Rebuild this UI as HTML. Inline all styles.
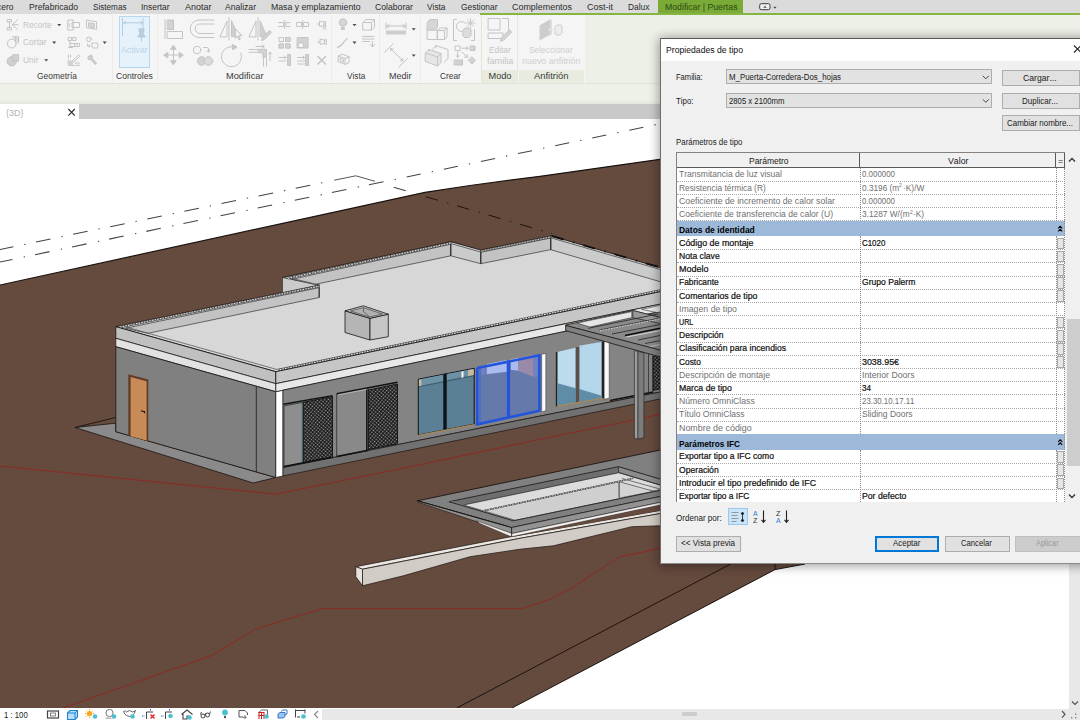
<!DOCTYPE html>
<html><head><meta charset="utf-8"><title>Revit</title>
<style>
html,body{margin:0;padding:0}
body{width:1080px;height:720px;overflow:hidden;position:relative;background:#fff;font-family:"Liberation Sans", sans-serif;}
.t{position:absolute;white-space:pre;line-height:1;transform-origin:0 0;font-kerning:none;}
.a{position:absolute;}
svg{position:absolute;left:0;top:0;overflow:hidden}

#menubar{left:0;top:0;width:1080px;height:14px;background:#dbdbdb}
#ribbon{left:0;top:14px;width:1080px;height:69px;background:#f5f5f5}
#ctx{left:585px;top:14px;width:495px;height:69px;background:#edf0e6}
#ctxline{left:480px;top:13px;width:600px;height:2px;background:#86b545}
#ctxtab{left:658px;top:0;width:85px;height:14px;background:#7aab37}
#modolab{left:482px;top:70px;width:35px;height:13px;background:#e8ecdf}
#anflab{left:519px;top:70px;width:65px;height:13px;background:#e8ecdf}
#optbar{left:0;top:83px;width:1080px;height:21px;background:linear-gradient(#eef1e8 0,#eef1e8 80%,#e4e6de 100%);border-top:1px solid #e2e4dc;box-sizing:border-box}
#tabbar{left:0;top:104px;width:1080px;height:15px;background:#c9c9c9}
#tab3d{left:0;top:104px;width:79px;height:15px;background:#fff}
#status{left:0;top:708px;width:1080px;height:12px;background:#fff}
#hscroll{left:322px;top:709px;width:758px;height:11px;background:#e8e8e8}
#hthumb{left:682px;top:712px;width:15px;height:4px;background:#cdcdcd;border-radius:1px}
#vscroll{left:1069px;top:560px;width:11px;height:149px;background:#e8e8e8}
.sep{position:absolute;top:15px;width:1px;height:67px;background:#ebebeb}
#activar{left:119px;top:16px;width:31px;height:52px;background:#e5f1fb;border:1px solid #b5d7f0;box-sizing:border-box}


#dlg{left:660px;top:38px;width:430px;height:526px;background:#f0f0f0;box-shadow:0 1px 10px 1px rgba(0,0,0,.38);border-left:1px solid #6e6e6e;border-top:1px solid #5a5a5a;border-bottom:1px solid #8a8a8a;box-sizing:border-box}
#dtitle{left:661px;top:39px;width:419px;height:22px;background:#fff}
.combo{position:absolute;left:726px;width:266px;height:15px;background:#e2e2e2;border:1px solid #adadad;box-sizing:border-box}
.btn{position:absolute;height:16px;background:#e1e1e1;border:1px solid #adadad;box-sizing:border-box}
#tbl{left:676px;top:152px;width:389px;height:350px;background:#fff;border-left:1px solid #828282;border-top:1px solid #828282;box-sizing:border-box}
#thead{left:677px;top:153px;width:388px;height:15px;background:#f0f0f0;border-bottom:1px solid #5a5a5a;box-sizing:border-box}
.grp{position:absolute;left:677px;width:388px;background:#9db9d9}
.hl{position:absolute;left:677px;width:388px;height:0;border-top:1px dotted #a8a8a8}
.vl{position:absolute;width:0;border-left:1px dotted #8a8a8a}
.sb{position:absolute;left:1057px;width:7px;background:#e6e6e6;border:1px solid #a8a8a8;box-sizing:border-box}
#dscroll{left:1065px;top:152px;width:15px;height:350px;background:#f0f0f0}
#dthumb{left:1067px;top:319px;width:13px;height:147px;background:#cdcdcd}
#sortsel{left:728px;top:508px;width:20px;height:17px;background:#cce4f7;border:1px solid #99c9ef;box-sizing:border-box}

</style></head><body>
<svg width="1080" height="720" viewBox="0 0 1080 720" style="z-index:0" shape-rendering="geometricPrecision">
<polygon points="0.0,285.0 425.0,192.3 470.0,185.5 520.0,178.8 540.0,176.3 600.0,167.8 660.0,159.3 900.0,130.0 900.0,564.0 805.0,564.0 775.0,569.6 512.0,708.0 0.0,708.0" fill="#654a3e" />
<polyline points="0.0,285.0 425.0,192.3 470.0,185.5 520.0,178.8 540.0,176.3 600.0,167.8 660.0,159.3 900.0,130.0" fill="none" stroke="#1a1410" stroke-width="1.2" />
<polyline points="805.0,564.0 775.0,569.6 512.0,708.0" fill="none" stroke="#1a1410" stroke-width="1.0" />
<polyline points="456.7,708.0 730.7,564.0" fill="none" stroke="#1a1410" stroke-width="1.0" />
<polyline points="775.0,562.0 775.0,569.6" fill="none" stroke="#1a1410" stroke-width="1.0" />
<line x1="0.0" y1="249.5" x2="330.0" y2="181.1" stroke="#444444" stroke-width="1.05" stroke-dasharray="14.81 11.03 1.33 10.72" stroke-dashoffset="1.12"/>
<polyline points="334.2,180.2 355.8,175.8 375.0,181.3" fill="none" stroke="#444444" stroke-width="0.9" />
<line x1="0.0" y1="262.0" x2="385.5" y2="181.3" stroke="#444444" stroke-width="1.05" stroke-dasharray="14.81 11.55 1.33 10.22" stroke-dashoffset="2.15"/>
<line x1="394.0" y1="179.7" x2="660.0" y2="123.7" stroke="#444444" stroke-width="1.05" stroke-dasharray="14.31 11.24 1.33 11.04" stroke-dashoffset="24.93"/>
<line x1="393.7" y1="187.2" x2="406.5" y2="190.9" stroke="#444444" stroke-width="1.05" stroke-dasharray="12.50 9.69 1.35 9.17" stroke-dashoffset="0.00"/>
<line x1="425.8" y1="196.7" x2="552.0" y2="233.6" stroke="#1c1512" stroke-width="1.0" stroke-dasharray="12.50 9.69 1.35 9.17" stroke-dashoffset="0.00"/>
<polyline points="0.0,466.0 276.0,494.2 410.0,466.8 540.0,439.3 630.0,420.8 660.0,414.5" fill="none" stroke="#8d2a22" stroke-width="1.0" />
<polyline points="63.0,708.0 213.0,655.0 255.5,629.0 322.0,608.6 521.5,608.6 551.0,599.0 568.3,590.0 620.0,556.7 643.7,552.0 660.0,548.3" fill="none" stroke="#8d2a22" stroke-width="1.0" />
<polygon points="75.0,427.5 115.8,423.2 115.8,431.7 275.8,477.5 253.3,483.0" fill="#8a8a8a" stroke="#1a1410" stroke-width="0.8" stroke-linejoin="round" />
<polyline points="75.0,427.5 115.8,417.4" fill="none" stroke="#1a1410" stroke-width="0.9" />
<polygon points="115.8,326.7 319.2,285.0 282.5,277.5 450.8,241.7 480.8,250.0 550.8,235.8 660.0,267.5 700.0,279.0 700.0,283.4 660.0,291.7 275.8,371.7" fill="#d7d7d7" stroke="#1a1410" stroke-width="0.9" stroke-linejoin="round" />
<polygon points="125.5,328.3 319.2,287.6 319.2,297.5 148.1,333.3" fill="#c3c3c3" stroke="#333" stroke-width="0.7" stroke-linejoin="round" />
<polygon points="282.5,277.5 319.2,285.0 282.5,292.6" fill="#cbcbcb" stroke="#333" stroke-width="0.7" stroke-linejoin="round" />
<polygon points="292.0,279.3 450.8,244.2 450.8,255.8 315.0,284.4" fill="#c3c3c3" stroke="#333" stroke-width="0.7" stroke-linejoin="round" />
<polygon points="450.8,243.5 480.8,252.0 480.8,263.7 450.8,255.8" fill="#cbcbcb" stroke="#333" stroke-width="0.7" stroke-linejoin="round" />
<polygon points="480.8,252.3 550.8,238.0 550.8,249.6 480.8,263.7" fill="#c3c3c3" stroke="#333" stroke-width="0.7" stroke-linejoin="round" />
<polygon points="550.8,237.8 700.0,281.0 700.0,293.3 550.8,249.7" fill="#cbcbcb" stroke="#333" stroke-width="0.7" stroke-linejoin="round" />
<polyline points="450.8,241.7 450.8,255.8" fill="none" stroke="#222" stroke-width="0.9" />
<polyline points="480.8,250.0 480.8,263.7" fill="none" stroke="#222" stroke-width="0.9" />
<polyline points="550.8,235.8 550.8,249.7" fill="none" stroke="#222" stroke-width="0.9" />
<polyline points="319.2,285.0 319.2,297.5" fill="none" stroke="#222" stroke-width="0.9" />
<line x1="551.7" y1="236.0" x2="660.0" y2="267.4" stroke="#15100d" stroke-width="1.9" stroke-dasharray="12.49 9.68 1.35 9.16" stroke-dashoffset="0.00"/>
<line x1="120" y1="327" x2="319.2" y2="286.2" stroke="#4a4a4a" stroke-width="2.3"/>
<line x1="120" y1="327" x2="319.2" y2="286.2" stroke="#e0e0e0" stroke-width="1.1" stroke-dasharray="1.7 1.0"/>
<line x1="288" y1="278.2" x2="450.8" y2="243" stroke="#4a4a4a" stroke-width="2.3"/>
<line x1="288" y1="278.2" x2="450.8" y2="243" stroke="#e0e0e0" stroke-width="1.1" stroke-dasharray="1.7 1.0"/>
<line x1="482" y1="251" x2="550.8" y2="236.9" stroke="#4a4a4a" stroke-width="2.1"/>
<line x1="482" y1="251" x2="550.8" y2="236.9" stroke="#e0e0e0" stroke-width="0.9" stroke-dasharray="1.7 1.0"/>
<polyline points="291.5,278.2 316.0,284.3" fill="none" stroke="#4a4a4a" stroke-width="0.7" />
<polyline points="125.5,326.9 283.0,371.2" fill="none" stroke="#4a4a4a" stroke-width="0.7" />
<line x1="277" y1="370.3" x2="700" y2="282.2" stroke="#4a4a4a" stroke-width="2.5"/>
<line x1="277" y1="370.3" x2="700" y2="282.2" stroke="#e4e4e4" stroke-width="1.2" stroke-dasharray="1.7 1.0"/>
<polygon points="345.0,310.8 370.0,318.3 370.0,340.0 345.0,332.5" fill="#b5b5b5" stroke="#1a1410" stroke-width="0.8" stroke-linejoin="round" />
<polygon points="370.0,318.3 388.3,314.2 388.3,336.7 370.0,340.0" fill="#c6c6c6" stroke="#1a1410" stroke-width="0.8" stroke-linejoin="round" />
<polygon points="345.0,310.8 363.3,305.8 388.3,314.2 370.0,318.3" fill="#c2c2c2" stroke="#1a1410" stroke-width="0.8" stroke-linejoin="round" />
<polygon points="350.5,311.0 363.5,307.6 382.5,314.0 369.7,317.0" fill="#b0b0b0" stroke="#333" stroke-width="0.6" stroke-linejoin="round" />
<polyline points="363.5,307.6 363.5,311.5 369.7,317.0" fill="none" stroke="#333" stroke-width="0.6" />
<polygon points="115.8,326.7 275.8,371.7 275.8,383.7 115.8,338.3" fill="#c0c0c0" stroke="#1a1410" stroke-width="0.8" stroke-linejoin="round" />
<polygon points="115.8,338.3 275.8,383.7 275.8,391.7 115.8,346.7" fill="#e2e2e2" stroke="#1a1410" stroke-width="0.7" stroke-linejoin="round" />
<polygon points="115.8,346.7 275.8,391.7 275.8,477.5 115.8,431.7" fill="#808080" stroke="#1a1410" stroke-width="0.8" stroke-linejoin="round" />
<polyline points="256.3,386.3 256.3,472.0" fill="none" stroke="#1a1a1a" stroke-width="0.8" />
<polygon points="128.3,374.2 148.3,379.4 148.3,441.3 128.3,435.6" fill="#5e3d28" />
<polygon points="130.6,377.0 146.6,381.2 146.6,440.6 130.6,436.2" fill="#c88a56" />
<polyline points="141.0,410.8 144.5,411.6 144.5,413.3" fill="none" stroke="#111" stroke-width="1.1" />
<polygon points="275.8,391.7 283.0,390.2 283.0,476.0 275.8,477.5" fill="#ffffff" stroke="#1a1410" stroke-width="0.7" stroke-linejoin="round" />
<polygon points="275.8,371.7 700.0,283.4 700.0,295.9 275.8,383.7" fill="#c6c6c6" stroke="#1a1410" stroke-width="0.8" stroke-linejoin="round" />
<polygon points="275.8,383.7 700.0,295.9 700.0,303.3 275.8,391.7" fill="#e8e8e8" stroke="#1a1410" stroke-width="0.7" stroke-linejoin="round" />
<polygon points="283.0,390.2 700.0,303.3 700.0,384.0 283.0,467.6" fill="#848484" stroke="#1a1410" stroke-width="0.7" stroke-linejoin="round" />
<polygon points="283.0,467.6 700.0,384.0 700.0,390.8 283.0,475.9" fill="#717171" stroke="#1a1410" stroke-width="0.7" stroke-linejoin="round" />
<defs><pattern id="hatch" width="2.6" height="2.6" patternUnits="userSpaceOnUse" patternTransform="rotate(40)">
<rect width="2.6" height="2.6" fill="#080808"/><rect x="0.55" y="0.55" width="1.5" height="1.5" fill="#a4a4a4"/></pattern></defs>
<polygon points="284.0,405.9 303.3,402.3 303.3,463.0 284.0,466.8" fill="#8e8e8e" stroke="#222" stroke-width="0.7" stroke-linejoin="round" />
<polyline points="283.3,404.2 332.5,395.6" fill="none" stroke="#111" stroke-width="1.4" />
<polygon points="303.3,402.3 332.5,396.5 332.5,457.2 303.3,463.0" fill="url(#hatch)" stroke="#111" stroke-width="0.9" stroke-linejoin="round" />
<polyline points="302.3,403.0 302.3,463.0" fill="none" stroke="#3f5f6e" stroke-width="1.0" />
<polyline points="284.0,466.6 333.0,457.0" fill="none" stroke="#111" stroke-width="1.5" />
<polygon points="336.7,394.6 368.3,388.4 368.3,450.2 336.7,456.6" fill="#898989" stroke="#222" stroke-width="0.7" stroke-linejoin="round" />
<polyline points="336.7,393.8 397.5,382.2" fill="none" stroke="#111" stroke-width="1.4" />
<polyline points="338.0,394.8 367.0,389.2" fill="none" stroke="#d0d0d0" stroke-width="0.8" />
<polygon points="368.3,390.0 397.5,384.0 397.5,443.7 368.3,449.5" fill="url(#hatch)" stroke="#111" stroke-width="0.9" stroke-linejoin="round" />
<polyline points="366.8,389.5 366.8,450.0" fill="none" stroke="#111" stroke-width="1.4" />
<polyline points="336.7,456.6 368.3,450.2" fill="none" stroke="#111" stroke-width="1.5" />
<polygon points="418.3,379.2 474.2,368.3 474.2,424.2 418.3,435.0" fill="#5b7f94" stroke="#111" stroke-width="1.0" stroke-linejoin="round" />
<polygon points="418.8,379.6 473.7,368.8 473.7,374.0 418.8,386.5" fill="#6d91a5" />
<polygon points="419.0,380.0 421.5,379.5 421.5,386.0 419.0,386.5" fill="#c9b99c" />
<polygon points="468.0,370.2 473.7,369.0 473.7,375.0 468.0,376.3" fill="#c9b99c" />
<polygon points="461.5,371.5 463.5,371.1 463.5,378.0 461.5,378.4" fill="#f4f4f4" />
<polyline points="418.8,386.7 473.7,375.8" fill="none" stroke="#2f4a5a" stroke-width="0.7" />
<polygon points="443.3,374.3 446.7,373.6 446.7,429.6 443.3,430.3" fill="#0c1418" />
<polyline points="418.3,435.4 474.2,424.6" fill="none" stroke="#a98c5c" stroke-width="1.3" />
<polygon points="475.8,367.5 540.8,354.2 540.8,411.7 475.8,425.8" fill="#6579aa" />
<polygon points="481.3,367.3 485.2,366.5 485.2,374.6 481.3,375.3" fill="#7283c4" />
<polygon points="486.7,363.9 506.7,359.9 506.7,371.7 486.7,374.3" fill="#aabbf0" />
<polygon points="510.8,359.2 518.3,357.7 518.3,370.8 510.8,369.8" fill="#aabbf0" />
<polygon points="518.3,357.7 533.3,354.8 533.3,376.7 518.3,370.8" fill="#9b89a9" />
<polygon points="533.3,354.8 537.5,354.0 537.5,377.0 533.3,376.7" fill="#7283c4" />
<polyline points="477.2,368.0 539.4,355.3 539.4,410.8 477.2,424.3 477.2,368.0" fill="none" stroke="#2255dc" stroke-width="2.6" />
<polyline points="508.5,362.0 508.5,417.5" fill="none" stroke="#2255dc" stroke-width="3.2" />
<polyline points="480.0,368.5 480.0,423.0" fill="none" stroke="#3f66dd" stroke-width="1.0" />
<polygon points="541.7,354.2 545.8,353.4 545.8,410.8 541.7,411.7" fill="#fbfbfb" stroke="#333" stroke-width="0.5" stroke-linejoin="round" />
<polygon points="555.8,352.2 604.2,341.2 604.2,398.5 555.8,406.6" fill="#222" />
<polygon points="557.5,351.7 575.8,347.5 575.8,402.5 557.5,405.8" fill="#bcdcee" />
<polygon points="579.2,345.8 601.7,341.7 601.7,398.3 579.2,402.0" fill="#b4d7eb" />
<polygon points="557.5,383.3 575.8,388.3 575.8,402.5 557.5,405.8" fill="#5f8ca6" />
<polygon points="579.2,389.0 601.7,395.8 601.7,398.3 579.2,402.0" fill="#5f8ca6" />
<polygon points="575.8,347.5 579.2,346.7 579.2,402.0 575.8,402.6" fill="#5a5048" />
<polyline points="557.0,406.2 603.0,398.4" fill="none" stroke="#a98c5c" stroke-width="1.2" />
<polygon points="604.2,341.0 609.2,340.0 609.2,398.2 604.2,399.2" fill="#fbfbfb" stroke="#333" stroke-width="0.5" stroke-linejoin="round" />
<polygon points="653.0,356.7 700.0,347.0 700.0,381.0 653.0,390.4" fill="url(#hatch)" stroke="#111" stroke-width="0.8" stroke-linejoin="round" />
<polyline points="610.0,400.5 653.0,392.0" fill="none" stroke="#111" stroke-width="1.3" />
<polygon points="565.6,325.0 632.8,310.5 700.0,327.5 700.0,361.0 565.6,325.6" fill="#8a8a8a" stroke="#1a1410" stroke-width="0.8" stroke-linejoin="round" />
<polygon points="577.0,323.1 631.8,311.6 631.8,317.6 590.0,327.0" fill="#e6e6e6" stroke="#333" stroke-width="0.6" stroke-linejoin="round" />
<polygon points="641.5,309.3 700.0,297.0 700.0,303.3 657.0,312.6" fill="#e6e6e6" stroke="#333" stroke-width="0.6" stroke-linejoin="round" />
<polygon points="632.8,310.5 700.0,327.5 700.0,331.5 632.8,317.8" fill="#9a9a9a" stroke="#222" stroke-width="0.7" stroke-linejoin="round" />
<polyline points="588.3,328.3 658.3,313.9" fill="none" stroke="#222" stroke-width="0.8" />
<polyline points="599.4,330.0 658.3,318.3" fill="none" stroke="#333" stroke-width="0.8" />
<line x1="600" y1="330.8" x2="660" y2="318.9" stroke="#ddd" stroke-width="0.9" stroke-dasharray="1.6 1.2"/>
<polyline points="612.0,334.0 660.0,324.5" fill="none" stroke="#222" stroke-width="0.8" />
<polyline points="625.0,335.6 660.0,328.3" fill="none" stroke="#0a0a0a" stroke-width="1.5" />
<polyline points="626.1,337.1 660.0,330.6" fill="none" stroke="#e8e8e8" stroke-width="0.8" />
<polyline points="638.0,340.0 660.0,335.5" fill="none" stroke="#222" stroke-width="0.8" />
<polyline points="645.0,343.5 660.0,340.6" fill="none" stroke="#222" stroke-width="0.8" />
<polyline points="650.0,346.5 660.0,344.5" fill="none" stroke="#ccc" stroke-width="0.8" />
<polygon points="565.6,325.4 700.0,360.4 700.0,368.0 565.6,330.6" fill="#808080" stroke="#1a1410" stroke-width="0.8" stroke-linejoin="round" />
<polygon points="634.4,350.6 638.0,351.5 638.0,439.0 634.4,438.2" fill="#9c9c9c" stroke="#222" stroke-width="0.6" stroke-linejoin="round" />
<polygon points="638.0,351.5 643.9,353.0 643.9,437.8 638.0,439.0" fill="#7c7c7c" stroke="#222" stroke-width="0.6" stroke-linejoin="round" />
<polyline points="648.5,354.0 648.5,394.5" fill="none" stroke="#222" stroke-width="0.7" />
<polyline points="652.8,355.3 652.8,393.5" fill="none" stroke="#222" stroke-width="0.7" />
<polygon points="417.5,500.8 700.0,441.7 700.0,488.2 511.7,527.5" fill="#808080" stroke="#1a1410" stroke-width="0.9" stroke-linejoin="round" />
<polygon points="511.7,527.5 700.0,488.2 700.0,494.0 511.7,533.6" fill="#929292" stroke="#1a1410" stroke-width="0.6" stroke-linejoin="round" />
<polygon points="511.7,533.6 700.0,494.0 700.0,496.5 511.7,536.7" fill="#f0f0f0" stroke="#1a1410" stroke-width="0.5" stroke-linejoin="round" />
<polygon points="417.5,500.8 511.7,527.5 511.7,533.4 417.5,501.9" fill="#929292" stroke="#1a1410" stroke-width="0.6" stroke-linejoin="round" />
<polygon points="476.0,520.6 511.7,533.4 511.7,536.9 480.0,523.5" fill="#f0f0f0" stroke="#1a1410" stroke-width="0.4" stroke-linejoin="round" />
<polygon points="449.2,501.7 618.3,466.7 700.0,491.0 700.0,482.0 515.0,520.0" fill="#6e6e6e" stroke="#1a1410" stroke-width="0.8" stroke-linejoin="round" />
<polygon points="463.3,505.0 618.8,472.7 700.0,497.0 700.0,484.5 516.0,520.4" fill="#dcdcdc" stroke="#222" stroke-width="0.7" stroke-linejoin="round" />
<polygon points="618.3,466.7 700.0,491.0 700.0,496.8 618.8,472.5" fill="#8c8c8c" stroke="#222" stroke-width="0.7" stroke-linejoin="round" />
<polygon points="483.3,510.8 619.2,481.7 619.2,497.5 700.0,482.0 515.5,520.4" fill="#cfcfcf" stroke="#333" stroke-width="0.6" stroke-linejoin="round" />
<polygon points="619.2,481.7 660.0,493.0 700.0,482.0 619.2,497.5" fill="#d4d4d4" />
<polyline points="619.2,481.7 619.2,497.5" fill="none" stroke="#333" stroke-width="0.8" />
<polyline points="619.2,481.7 660.0,493.0" fill="none" stroke="#444" stroke-width="0.7" />
<polyline points="622.0,478.5 660.0,489.0" fill="none" stroke="#444" stroke-width="0.7" />
<polyline points="483.3,510.8 633.3,478.3" fill="none" stroke="#444" stroke-width="1.4" />
<line x1="483.3" y1="510.8" x2="633.3" y2="478.3" stroke="#e8e8e8" stroke-width="0.8" stroke-dasharray="1.5 1.2"/>
<polygon points="515.0,520.0 700.0,481.5 700.0,488.2 511.7,527.5 449.2,501.7 452.0,501.2" fill="#808080" />
<polyline points="449.2,501.7 513.3,520.8 700.0,482.0" fill="none" stroke="#1a1410" stroke-width="0.8" />
<polyline points="511.7,527.5 700.0,488.2" fill="none" stroke="#1a1410" stroke-width="0.8" />
<polyline points="417.5,500.8 511.7,527.5 511.7,536.7" fill="none" stroke="#1a1410" stroke-width="0.8" />
<polygon points="355.8,566.7 506.7,537.5 700.0,503.5 700.0,506.5 520.0,538.3 362.5,569.2" fill="#ebe7e3" stroke="#1a1410" stroke-width="0.7" stroke-linejoin="round" />
<polygon points="362.5,569.2 520.0,538.3 700.0,506.5 700.0,525.5 660.0,525.8 631.7,526.7 553.3,545.8 520.0,549.2 470.0,556.7 403.3,575.8 362.5,585.8" fill="#d2ccc6" stroke="#1a1410" stroke-width="0.7" stroke-linejoin="round" />
<polygon points="355.8,566.7 362.5,569.2 362.5,585.8 355.8,576.7" fill="#e6e2de" stroke="#1a1410" stroke-width="0.7" stroke-linejoin="round" />
<polygon points="511.7,527.5 700.0,488.2 700.0,494.0 511.7,533.6" fill="#929292" stroke="#1a1410" stroke-width="0.6" stroke-linejoin="round" />
<polygon points="511.7,533.6 700.0,494.0 700.0,496.5 511.7,536.7" fill="#f0f0f0" stroke="#1a1410" stroke-width="0.5" stroke-linejoin="round" />
<polygon points="511.7,536.9 700.0,496.7 700.0,503.3 511.7,536.9" fill="#654a3e" />
</svg>
<div style="position:absolute;left:0;top:0;z-index:2">

<div class="a" id="menubar"></div>
<div class="a" id="ribbon"></div>
<div class="a" id="ctx"></div>
<div class="a" id="modolab"></div>
<div class="a" id="anflab"></div>
<div class="a" id="ctxtab"></div>
<div class="a" id="ctxline"></div>
<div class="sep" style="left:112px"></div>
<div class="sep" style="left:157px"></div>
<div class="sep" style="left:331px"></div>
<div class="sep" style="left:379px"></div>
<div class="sep" style="left:420px"></div>
<div class="sep" style="left:481px;background:#dfe6d2"></div>
<div class="sep" style="left:517px;background:#e4e8da"></div>
<div class="a" id="activar"></div>
<div class="a" id="optbar"></div>
<div class="a" id="tabbar"></div>
<div class="a" id="tab3d"></div>
<div class="a" id="status"></div>
<div class="a" id="hscroll"></div>
<div class="a" id="hthumb"></div>
<div class="a" id="vscroll"></div>
<svg width="1080" height="720" viewBox="0 0 1080 720" style="z-index:2;pointer-events:none">
<g fill="none" stroke="#c4c4c4" stroke-width="1" stroke-linecap="round" stroke-linejoin="round">
<!-- Geometria col1 -->
<path d="M9.5 21.5 v7 M7.5 19.5 h4 v2.5 h-4z M7.5 27.5 h4 v2.5 h-4z M17.5 20 l-5.5 4.7 l5.5 4.7 M13 24.7 h5"/>
<circle cx="11.8" cy="43.6" r="4.4"/><path d="M12.5 36.7 h6 v6.3 M14 38.3 h3.2 v3.6 M15.5 37 v5" />
<circle cx="11.8" cy="61.3" r="4.7" fill="#cfcfcf"/><path d="M12.8 54.7 h5.8 v6.4 h-5.8z" fill="#cfcfcf"/>
<!-- col2 -->
<path d="M68.2 20 h5 v10 h-5z M72.5 22.5 h7 v5 h-7z M70 23.5 l-1.3 1.5 l1.3 1.5"/>
<path d="M86.8 20.2 l9.8 1.5 v7.6 l-9.8 -1.5z"/><path d="M89 22.8 l5.4 .8 v4 l-5.4 -.8z" fill="#d6d6d6"/>
<path d="M68.5 37.5 h3 v3 h-3z M73 37.5 h3 v3 h-3z M70 40.5 v7 M70 43.5 h9.5 v3 h-9.5 M74.5 43.5 v3 M77 43.5 v3 M68.5 47.5 h4"/>
<circle cx="88.8" cy="39.3" r="2.3"/><path d="M92.2 43 h5 q.6 0 .6 .6 v3.8 q0 .6 -.6 .6 h-4.2 q-.8 0 -.8 -.8z M87.5 44 v2 h2.5 M89 45 l1.2 1 l-1.2 1"/>
<path d="M68.3 55 v3 M70.5 55 v2 M68.3 60 v5.5 h5.5 M68.3 62 h4 v3.5" /><path d="M68.5 60.5 h4.5 v5 h-4.5z" fill="#d2d2d2" stroke="none"/><path d="M73 60 l5.5 -5 l1.3 1.4 l-5.5 5z M75 63 h4.5 M75 65.3 h4.5"/>
<path d="M88 57 l3 -2.2 l1.8 2 l-1.2 1 l5 5.5 l-1.3 1.2 l-5 -5.5 l-1 .8z" fill="#cfcfcf"/>
<!-- Modificar big -->
<path d="M165 20 v18.5"/><path d="M167.5 20 h6 v9.5 h-6z" fill="#d2d2d2"/><path d="M167.5 31.5 h15 v7 h-15z"/>
<path d="M214 20 h-15 a8.75 8.75 0 0 0 0 17.5 h15 M214 24 h-14 a4.75 4.75 0 0 0 0 9.5 h14"/>
<path d="M229 17.5 v22.5 M220 36.5 l7 -15.5 v15.5z"/><path d="M231.5 21 v15.5 h6.5z" fill="#d0d0d0"/><path d="M235.2 29.2 v9 l2.2 -2 l1.6 3.6 l1.3 -.6 l-1.6 -3.5 h3z" fill="#f5f5f5" stroke="#bdbdbd"/>
<path d="M258 17.5 v22.5 M249 36.5 l7 -15.5 v15.5z"/><path d="M260 21 v15.5 h6.5z" fill="#d0d0d0"/><path d="M261.5 40.3 l1 -3 l7 -7 l2 2 l-7 7z" fill="#d0d0d0"/>
<path d="M173.5 46 v18 M164.5 55 h18"/><path d="M173.500 45.5 l2.6 3.800 h-5.2z M173.500 64.5 l2.6 -3.800 h-5.200z M164 55 l3.800 -2.600 v5.200z M183 55 l-3.800 -2.600 v5.200z" fill="#c4c4c4"/>
<circle cx="197" cy="50" r="3.7"/><path d="M203.500 47.500 h3.500 q1.500 0 1.500 1.500 v2.500 M207 50.500 l1.500 1.800 l1.500 -1.800"/><circle cx="201.700" cy="61" r="4.300" fill="#d2d2d2"/><circle cx="208.500" cy="61" r="4.300" fill="#dadada"/>
<path d="M236.500 48 a10 10 0 1 0 4.300 5"/><path d="M232.500 44.500 l4.500 2.300 l-4 2.800z" fill="#c4c4c4"/>
<path d="M249 49.500 h8.500 M249 52.300 h8.500 M256 46.500 h8 M262.300 45 l2 1.500 l-2 1.500 M263.500 58.500 v7.500 M266.500 58.500 v7.500 M270 60.500 v-8 M268.500 54 l1.500 -2 l1.500 2"/><path d="M258.500 49.300 h7.800 v8 h-3.400 v-4.600 h-4.400z" fill="#d2d2d2"/>
<!-- small grid -->
<path d="M278.500 22.500 h5 v4 h-5 M290 22.500 h-4 v4 h4 M284.700 20.500 v8"/>
<path d="M297 22.500 h4.500 v4 h-4.500z M304 22.500 h4.500 v4 h-4.500z M302.700 20.500 v8"/>
<path d="M317 24 h2.500 M319.500 21.500 v5 l4.500 -1 v-3z M324 22.200 l1.500 -.7 v5 l-1.500 -.7 M323 26.500 l3 3 M326 26.500 l-3 3"/>
<path d="M279.500 37.500 h4 v4 h-4z M286 37.500 h4 v4 h-4z M279.500 44 h4 v4 h-4z M286 44 h4 v4 h-4z" /><path d="M286 37.500 h4 v4 h-4z M279.500 44 h4 v4 h-4z M286 44 h4 v4 h-4z" fill="#d6d6d6"/>
<path d="M297.500 37.500 h10.500 v10.500 h-10.500z" fill="#d2d2d2"/><path d="M298.500 43 h5 v4.500 h-5z" fill="#f5f5f5"/>
<path d="M317.500 42 h2.500 M320 39.500 v5 l4.500 -1 v-3z M324.500 40.200 l1.800 -.7 v5 l-1.800 -.7"/>
<path d="M279 57.500 h7 M284.500 56 l1.500 1.500 l-1.500 1.500 M279 61 h7"/><path d="M288 54.500 h2.500 v11 h-2.500z" fill="#d0d0d0"/>
<path d="M297.500 57.500 h7 M303 56 l1.500 1.500 l-1.500 1.500 M297.500 61 h7 M297.500 64 h7"/><path d="M306 54.500 h2.500 v11 h-2.500z" fill="#d0d0d0"/>
<path d="M318 56.500 l7.500 7.500 M325.500 56.500 l-7.500 7.500" stroke-width="1.500"/>
<!-- Vista -->
<circle cx="343" cy="22.500" r="3.700" fill="#d6d6d6"/><path d="M341.700 27.500 h2.600 v2 h-2.600z" fill="#d0d0d0"/>
<path d="M363 22.500 l3 -3 h8.500 v7.500 l-3 3 h-8.500z M363 22.500 h8.500 v7.500 M371.500 22.500 l3 -3"/>
<path d="M337.500 47.300 q2 -.5 4 -3.300 l6 -5.800 l-5.500 6.500 q-2 2.600 -4.500 2.600z" fill="#cccccc"/>
<path d="M362.500 36.500 h11.500 M362.500 39 h11.500 M362.500 41.500 h7 M372.500 41.500 v5 M370.500 44.500 l2 2.500 l2 -2.500"/>
<path d="M338.500 56 l4 -1.800 l6.500 2.600 v5.800 l-4 1.800 l-6.500 -2.600z M338.500 56 l6.500 2.600 v5.800 M345 58.600 l4 -1.800 M340.500 58.300 l3 1.200 v2.600 l-3 -1.200z"/>
<!-- Medir -->
<path d="M386 23 v6 M406 23 v6 M386.500 26 h19 M389 24.500 l-2.300 1.500 l2.300 1.500 M403 24.500 l2.300 1.500 l-2.300 1.500"/><path d="M386 30.500 h20 v4 h-20z" fill="#cdcdcd" stroke="none"/>
<path d="M384.500 52.500 l8.500 -8.500 M399 67 l8.500 -8.500 M390.500 48.500 l12.500 12.500 M390.700 51 v-2.300 h2.300 M402.800 58.500 v2.300 h-2.300"/>
<!-- Crear -->
<path d="M427.500 30 h10 v9.500 h-10z M437.500 30.500 h7 v9 h-7z M437.500 30.500 l2.500 -2.500 h7 l-2.500 2.500 M444.500 39.500 l2.500 -2.500 v-9"/><path d="M427.500 22 l2.500 -2.500 h7.500 v8 l-2.500 2.500 h-7.500z" fill="#d6d6d6"/>
<path d="M456.500 19.500 h-3 v21 h3 M471.500 40.500 h3 v-11"/><path d="M465 23 a5 5 0 1 0 -3.500 8.500"/><path d="M463 30 l2.500 -2 h4 l1.500 1.500 v6 l-2 2 h-4.500 l-1.500 -1.500z" fill="#dcdcdc"/><path d="M470.500 18.500 v9 M466 23 h9 M467.300 19.800 l6.400 6.400 M473.700 19.800 l-6.400 6.400" stroke-width=".9"/>
<path d="M425.500 53 l3.500 -3.500 l12 4 v9 l-3.500 3.500 l-12 -4.500z" fill="#e6e6e6"/><path d="M432.500 49 l3.500 -3.500 l12 4 v9 l-3.500 3.500 M436 45.500 v2.500 M429 49.500 v1.500 M425.500 53 l12 4 l3.500 -3.500 M437.500 57 v9"/>
<path d="M455.500 46 h4.500 v4.500 h-4.500z M462 48.200 h6 M466.500 46.700 l1.800 1.500 l-1.800 1.500 M457.700 52 v5 M456.200 55.500 l1.500 1.800 l1.500 -1.800 M462 52 l5 5 M467.200 54.500 v2.700 h-2.700"/><path d="M470.500 46 h4.500 v4.500 h-4.500z M454.500 60 h8 v5 h-8z M472 57 l3.500 3.500 l-3.500 3.500 l-3.500 -3.500z" fill="#d2d2d2"/>
<!-- Modo -->
<path d="M488.500 18.500 h11.500 v11.500 h-11.500z M502.500 18.500 h6 v11.500 M488.500 33 h14.500 v5.500 h-14.500z M508.500 30 v3"/><path d="M500.500 41 l1 -3.200 l8 -8 l2.200 2.200 l-8 8z" fill="#d6d6d6"/>
</g>
<!-- Anfitrion -->
<path d="M539.500 25.500 l11 -6.500 v15.500 l-11 6z" fill="#cdcdcd"/><path d="M550.500 19 l1.500 1 v15 l-1.500 -.5" fill="#dedede"/>
<path d="M555 27 l2 -2 h4 l1 1 v7 l-2 2 h-4 l-1 -1z" fill="#ececec" stroke="#d0d0d0" stroke-width="1"/><path d="M548.500 29.500 h6 M548.500 28 l1.500 1.500 l-1.500 1.500" stroke="#e4e4e4" stroke-width="1" fill="none"/>
<!-- Controles icon -->
<g fill="none" stroke="#b5cbdb" stroke-width="1">
<path d="M122.500 18 v18 M143 18 v10 M123.500 22.800 h19 M126 21.300 l-2.300 1.500 l2.300 1.500 M140.500 21.300 l2.300 1.500 l-2.300 1.500"/>
<path d="M139 28.700 h5 v2.500 h-5z M139.800 31.200 v2.500 l-2 3.300 h7.400 l-2 -3.300 v-2.500z" fill="#b9cede"/><path d="M141.500 37 v4.500"/>
</g>
<!-- dropdown arrows -->
<g fill="#4a4a4a">
<path d="M57.200 24 h4 l-2 2.300z M52.200 41.600 h4 l-2 2.300z M44.200 59.200 h4 l-2 2.300z M102.700 41.600 h4 l-2 2.300z M352.500 24 h4 l-2 2.300z M352.500 41.600 h4 l-2 2.300z M411.700 28.200 h4 l-2 2.300z M411.700 54.500 h4 l-2 2.300z M773.200 6.700 h3.400 l-1.700 2z"/>
</g>
<rect x="759.700" y="3.700" width="10.300" height="6" rx="1.600" fill="#f0f0f0" stroke="#3c3c3c" stroke-width="1"/><path d="M763.200 7.800 h3.600 l-1.800 -2z" fill="#555"/>
<!-- tab close -->
<path d="M68.300 109 l6.500 6.700 M74.800 109 l-6.500 6.700" stroke="#333" stroke-width="1.200" fill="none"/>
<!-- status icons -->
<g fill="none" stroke-width="1">
<rect x="47.500" y="711" width="11" height="7" stroke="#444" stroke-width="1.200"/><rect x="50.500" y="713" width="5" height="3" stroke="#666" stroke-width=".8"/>
<path d="M67.500 713 l2.500 -2.500 h7.500 v6.500 l-2.500 2.500 h-7.500z" fill="#b8dcf6" stroke="#1c86d8" stroke-width="1.100"/><path d="M67.500 713 h7.500 v6.500 M75 713 l2.500 -2.500" stroke="#1c86d8"/>
<circle cx="89.500" cy="713.500" r="2.600" fill="#f5a623" stroke="none"/><path d="M89.500 709 v1.300 M89.500 716.700 v1.300 M85 713.500 h1.300 M92.700 713.500 h1.300 M86.300 710.300 l1 1 M92.700 710.300 l-1 1 M86.300 716.700 l1 -1" stroke="#f5a623"/>
<circle cx="95" cy="716.500" r="2.300" fill="#4cc0d0" stroke="none"/>
<circle cx="109.500" cy="713" r="3.600" stroke="#777"/><rect x="105.500" y="717.500" width="6" height="1.500" fill="#bbb" stroke="none"/><circle cx="114" cy="716.500" r="2.300" fill="#4cc0d0" stroke="none"/>
<path d="M123.500 711.500 q2 -1.500 3 .5 q3 -3 6 0 l3 -1.500 q-1 3.500 -3 5 q-3 2 -6 0 q-2 -1 -3 -4z" stroke="#666"/><circle cx="132.500" cy="716.500" r="2.300" fill="#4cc0d0" stroke="none"/>
<path d="M146.500 719 v-7 h6.500" stroke="#444"/><path d="M142 716 h3 M150.500 709 v2.500" stroke="#1c6fd0" stroke-dasharray="1.500 1"/><path d="M150.500 714.500 l4 4 M154.500 714.500 l-4 4" stroke="#e02020" stroke-width="1.300"/>
<path d="M165.500 719 v-7 h6.500" stroke="#444"/><path d="M161 716 h3 M169.500 709 v2.500" stroke="#1c6fd0" stroke-dasharray="1.500 1"/><circle cx="170.500" cy="716" r="2.300" fill="#4cc0d0" stroke="none"/>
<path d="M181.500 714.500 l5.500 -4.500 l5.500 4.500 M183 714 v5 h4 v-3 h2" stroke="#444" stroke-width="1.100"/><circle cx="189.500" cy="717.500" r="2.300" fill="#4cc0d0" stroke="none"/>
<circle cx="203" cy="716" r="2" stroke="#444"/><circle cx="207.500" cy="715" r="2" stroke="#444"/><path d="M204.500 714.500 l1.500 -1 M200.500 714.500 l1 -2.500 M209.500 714 l1 -2.500" stroke="#444"/>
<circle cx="225" cy="712.500" r="2.900" fill="#4cc0d0" stroke="none"/><path d="M224 716 h2 v1.500 l-1 1 l-1 -1z" fill="#555" stroke="none"/>
<path d="M239 710.500 h6 l2.500 2.500 v2" stroke="#555"/><path d="M239 710.500 v6.500 h4" stroke="#555"/><path d="M245 715.500 v3.500 M243.200 717.300 h3.600" stroke="#333" stroke-dasharray="1.200 .8"/>
<path d="M258.500 712.500 l3 -2.500 h6 v5" stroke="#666"/><path d="M259 712.500 v6.500 M261.500 712.500 v6.500 M264 713 v6 M258.500 712.500 h6 M258.500 715.500 h6" stroke="#d02020"/><circle cx="266.500" cy="716.500" r="2.300" fill="#4cc0d0" stroke="none"/>
<path d="M278 714 l2 -1.500 h5 v4 l-2 1.500 h-5z" fill="#9bc4ee" stroke="#3a78c8"/><path d="M281 711.500 l2 -1.500 h4 v4 l-2 1" stroke="#3a78c8"/>
<path d="M295.500 709.500 v8 M305 709.500 v4 M295.500 710.500 h9.500 M297 717 h3" stroke="#444"/><circle cx="303.500" cy="716.500" r="2.300" fill="#4cc0d0" stroke="none"/>
<path d="M318 711 l-3.500 3.500 l3.500 3.500" stroke="#888" stroke-width="1.200"/>
<path d="M1062 711 l3 3.300 l-3 3.300" stroke="#555" stroke-width="1.200"/>
<path d="M1072 701.500 l3 3 l3 -3" stroke="#555" stroke-width="1.200"/>
</g>
<rect x="1071" y="717" width="1.300" height="1.300" fill="#777"/><rect x="1075" y="717" width="1.300" height="1.300" fill="#777"/><rect x="1075" y="713.500" width="1.300" height="1.300" fill="#777"/>
</svg>

<span class="t" style="left:-3.5px;top:2.81px;font-size:9.2px;color:#2b2b2b;transform:scaleX(0.9231);">cero</span>
<span class="t" style="left:28.8px;top:2.81px;font-size:9.2px;color:#2b2b2b;transform:scaleX(0.9406);">Prefabricado</span>
<span class="t" style="left:92.8px;top:2.81px;font-size:9.2px;color:#2b2b2b;transform:scaleX(0.8863);">Sistemas</span>
<span class="t" style="left:141.0px;top:2.81px;font-size:9.2px;color:#2b2b2b;transform:scaleX(0.9147);">Insertar</span>
<span class="t" style="left:184.5px;top:2.81px;font-size:9.2px;color:#2b2b2b;transform:scaleX(0.9786);">Anotar</span>
<span class="t" style="left:225.3px;top:2.81px;font-size:9.2px;color:#2b2b2b;transform:scaleX(0.9336);">Analizar</span>
<span class="t" style="left:270.8px;top:2.81px;font-size:9.2px;color:#2b2b2b;transform:scaleX(0.9474);">Masa y emplazamiento</span>
<span class="t" style="left:375.0px;top:2.81px;font-size:9.2px;color:#2b2b2b;transform:scaleX(0.9419);">Colaborar</span>
<span class="t" style="left:427.3px;top:2.81px;font-size:9.2px;color:#2b2b2b;transform:scaleX(0.9052);">Vista</span>
<span class="t" style="left:460.5px;top:2.81px;font-size:9.2px;color:#2b2b2b;transform:scaleX(0.9161);">Gestionar</span>
<span class="t" style="left:512.0px;top:2.81px;font-size:9.2px;color:#2b2b2b;transform:scaleX(0.9709);">Complementos</span>
<span class="t" style="left:586.8px;top:2.81px;font-size:9.2px;color:#2b2b2b;transform:scaleX(0.9794);">Cost-it</span>
<span class="t" style="left:627.5px;top:2.81px;font-size:9.2px;color:#2b2b2b;transform:scaleX(0.9149);">Dalux</span>
<span class="t" style="left:664.5px;top:2.81px;font-size:9.2px;color:#2c4a12;transform:scaleX(0.9485);">Modificar | Puertas</span>
<span class="t" style="left:37.0px;top:72.01px;font-size:9.2px;color:#3a3a3a;transform:scaleX(0.9215);">Geometría</span>
<span class="t" style="left:116.3px;top:72.01px;font-size:9.2px;color:#3a3a3a;transform:scaleX(0.9332);">Controles</span>
<span class="t" style="left:226.0px;top:72.01px;font-size:9.2px;color:#3a3a3a;transform:scaleX(1.0059);">Modificar</span>
<span class="t" style="left:347.0px;top:72.01px;font-size:9.2px;color:#3a3a3a;transform:scaleX(0.8954);">Vista</span>
<span class="t" style="left:388.7px;top:72.01px;font-size:9.2px;color:#3a3a3a;transform:scaleX(0.9789);">Medir</span>
<span class="t" style="left:440.0px;top:72.01px;font-size:9.2px;color:#3a3a3a;transform:scaleX(0.9050);">Crear</span>
<span class="t" style="left:488.5px;top:72.01px;font-size:9.2px;color:#3a3a3a;">Modo</span>
<span class="t" style="left:533.7px;top:72.01px;font-size:9.2px;color:#3a3a3a;transform:scaleX(1.0232);">Anfitrión</span>
<span class="t" style="left:22.8px;top:20.81px;font-size:9.2px;color:#c4c4c4;transform:scaleX(0.8952);">Recorte</span>
<span class="t" style="left:22.8px;top:38.41px;font-size:9.2px;color:#c4c4c4;transform:scaleX(0.9204);">Cortar</span>
<span class="t" style="left:22.8px;top:56.01px;font-size:9.2px;color:#c4c4c4;transform:scaleX(0.9194);">Unir</span>
<span class="t" style="left:121.3px;top:46.21px;font-size:9.2px;color:#bdd3e3;transform:scaleX(0.9539);">Activar</span>
<span class="t" style="left:489.3px;top:46.21px;font-size:9.2px;color:#c4c4c4;transform:scaleX(0.9036);">Editar</span>
<span class="t" style="left:486.8px;top:57.21px;font-size:9.2px;color:#c4c4c4;transform:scaleX(0.9901);">familia</span>
<span class="t" style="left:529.3px;top:46.21px;font-size:9.2px;color:#cfcfcf;transform:scaleX(0.9101);">Seleccionar</span>
<span class="t" style="left:521.6px;top:57.21px;font-size:9.2px;color:#cfcfcf;transform:scaleX(0.9705);">nuevo anfitrión</span>
<span class="t" style="left:5.8px;top:109.01px;font-size:9.2px;color:#b4b4b4;transform:scaleX(0.9782);">{3D}</span>
<span class="t" style="left:4.3px;top:711.11px;font-size:9.2px;color:#222;transform:scaleX(0.8431);">1 : 100</span>
</div>
<div style="position:absolute;left:0;top:0;z-index:5">
<div class="a" id="dlg"></div><div class="a" id="dtitle"></div>
<div class="combo" style="top:69px"></div><div class="combo" style="top:93px"></div>
<div class="btn" style="left:1002px;top:69.5px;width:78px"></div>
<div class="btn" style="left:1002px;top:92.5px;width:78px"></div>
<div class="btn" style="left:1002px;top:115px;width:78px"></div>
<div class="btn" style="left:676px;top:535.5px;width:64.5px"></div>
<div class="btn" style="left:874.5px;top:535.5px;width:64.5px;border:2px solid #0078d7"></div>
<div class="btn" style="left:944.5px;top:535.5px;width:65px"></div>
<div class="btn" style="left:1015px;top:535.5px;width:70px;background:#cccccc;border-color:#bfbfbf"></div>
<div class="a" id="tbl"></div><div class="a" id="thead"></div>
<div class="a" id="dscroll"></div><div class="a" id="dthumb"></div>
<div class="a" id="sortsel"></div>
<div class="hl" style="top:180.7px"></div>
<div class="hl" style="top:193.9px"></div>
<div class="hl" style="top:207.1px"></div>
<div class="hl" style="top:220.3px"></div>
<div class="grp" style="top:220.8px;height:15.6px"></div>
<svg width="1080" height="720" style="z-index:6"><path d="M1058.2 228.3 l2 -2 l2 2 M1058.2 231.3 l2 -2 l2 2" stroke="#000" stroke-width="1.1" fill="none"/></svg>
<div class="sb" style="top:237.6px;height:11.6px"></div>
<div class="hl" style="top:249.1px"></div>
<div class="sb" style="top:250.8px;height:11.6px"></div>
<div class="hl" style="top:262.3px"></div>
<div class="sb" style="top:264.0px;height:11.6px"></div>
<div class="hl" style="top:275.5px"></div>
<div class="sb" style="top:277.2px;height:11.6px"></div>
<div class="hl" style="top:288.7px"></div>
<div class="sb" style="top:290.4px;height:11.6px"></div>
<div class="hl" style="top:301.9px"></div>
<div class="hl" style="top:315.1px"></div>
<div class="sb" style="top:316.8px;height:11.6px"></div>
<div class="hl" style="top:328.3px"></div>
<div class="sb" style="top:330.0px;height:11.6px"></div>
<div class="hl" style="top:341.5px"></div>
<div class="sb" style="top:343.2px;height:11.6px"></div>
<div class="hl" style="top:354.7px"></div>
<div class="sb" style="top:356.4px;height:11.6px"></div>
<div class="hl" style="top:367.9px"></div>
<div class="hl" style="top:381.1px"></div>
<div class="hl" style="top:394.3px"></div>
<div class="hl" style="top:407.5px"></div>
<div class="hl" style="top:420.7px"></div>
<div class="hl" style="top:433.9px"></div>
<div class="grp" style="top:434.4px;height:15.6px"></div>
<svg width="1080" height="720" style="z-index:6"><path d="M1058.2 441.9 l2 -2 l2 2 M1058.2 444.9 l2 -2 l2 2" stroke="#000" stroke-width="1.1" fill="none"/></svg>
<div class="sb" style="top:451.2px;height:11.6px"></div>
<div class="hl" style="top:462.7px"></div>
<div class="sb" style="top:464.4px;height:11.6px"></div>
<div class="hl" style="top:475.9px"></div>
<div class="sb" style="top:477.6px;height:11.6px"></div>
<div class="hl" style="top:489.1px"></div>
<div class="vl" style="left:859.5px;top:168.0px;height:52.8px"></div>
<div class="vl" style="left:1055.5px;top:168.0px;height:52.8px"></div>
<div class="vl" style="left:859.5px;top:236.4px;height:198.0px"></div>
<div class="vl" style="left:1055.5px;top:236.4px;height:198.0px"></div>
<div class="vl" style="left:859.5px;top:450.0px;height:52.0px"></div>
<div class="vl" style="left:1055.5px;top:450.0px;height:52.0px"></div>
<div class="a" style="left:859px;top:153px;width:1px;height:15px;background:#5a5a5a"></div>
<div class="a" style="left:1055px;top:153px;width:1px;height:15px;background:#5a5a5a"></div>
<div class="a" style="left:1064px;top:153px;width:1px;height:15px;background:#5a5a5a"></div>
<div class="vl" style="left:1064px;top:168px;height:334px"></div>
<div class="a" style="left:661px;top:502px;width:419px;height:6px;background:#f0f0f0"></div>
<svg width="1080" height="720" viewBox="0 0 1080 720" style="z-index:6;pointer-events:none">
<!-- close X -->
<path d="M1074 45.5 l7 7 M1074 52.5 l7 -7" stroke="#222" stroke-width="1.1" fill="none"/>
<!-- combo chevrons -->
<path d="M982.8 75.8 l3 3 l3 -3" stroke="#444" stroke-width="1" fill="none"/>
<path d="M982.8 99.3 l3 3 l3 -3" stroke="#444" stroke-width="1" fill="none"/>
<!-- table scroll arrows -->
<path d="M1069 161.5 l3 -3 l3 3" stroke="#333" stroke-width="1.3" fill="none"/>
<path d="M1069 494.5 l3 3 l3 -3" stroke="#333" stroke-width="1.3" fill="none"/>
<!-- sort icons -->
<g stroke="#8c8c8c" stroke-width="0.9" fill="none">
<path d="M731.5 512.5 h7 M731.5 515.5 h6 M731.5 518.5 h7 M731.5 521.5 h5"/>
</g>
<path d="M742.5 512.5 v9 M741 514 l1.500 -2 l1.500 2z M741 520 l1.500 2 l1.500 -2z" stroke="#222" stroke-width="0.9" fill="#222"/>
<path d="M763.5 510.5 v11.5 M761.5 519.8 l2 2.5 l2 -2.5" stroke="#222" stroke-width="1.1" fill="none"/>
<path d="M786.5 510.5 v11.5 M784.5 519.8 l2 2.5 l2 -2.5" stroke="#222" stroke-width="1.1" fill="none"/>
</svg>

<span class="t" style="left:666.3px;top:44.57px;font-size:9.6px;color:#111;transform:scaleX(0.9022);">Propiedades de tipo</span>
<span class="t" style="left:675.5px;top:73.47px;font-size:8.9px;color:#1a1a1a;transform:scaleX(0.8527);">Familia:</span>
<span class="t" style="left:675.5px;top:96.77px;font-size:8.9px;color:#1a1a1a;transform:scaleX(0.8868);">Tipo:</span>
<span class="t" style="left:729.0px;top:73.47px;font-size:8.9px;color:#1a1a1a;transform:scaleX(0.8869);">M_Puerta-Corredera-Dos_hojas</span>
<span class="t" style="left:729.0px;top:96.77px;font-size:8.9px;color:#1a1a1a;transform:scaleX(0.8703);">2805 x 2100mm</span>
<span class="t" style="left:1023.0px;top:73.77px;font-size:8.9px;color:#1a1a1a;transform:scaleX(0.9730);">Cargar...</span>
<span class="t" style="left:1022.0px;top:96.77px;font-size:8.9px;color:#1a1a1a;transform:scaleX(0.9011);">Duplicar...</span>
<span class="t" style="left:1007.0px;top:119.17px;font-size:8.9px;color:#1a1a1a;transform:scaleX(0.8980);">Cambiar nombre...</span>
<span class="t" style="left:675.5px;top:138.17px;font-size:8.9px;color:#1a1a1a;transform:scaleX(0.8869);">Parámetros de tipo</span>
<span class="t" style="left:675.5px;top:514.07px;font-size:8.9px;color:#1a1a1a;transform:scaleX(0.9100);">Ordenar por:</span>
<span class="t" style="left:680.5px;top:539.47px;font-size:8.9px;color:#1a1a1a;transform:scaleX(0.9121);">&lt;&lt; Vista previa</span>
<span class="t" style="left:892.6px;top:539.47px;font-size:8.9px;color:#1a1a1a;transform:scaleX(0.8956);">Aceptar</span>
<span class="t" style="left:961.2px;top:539.47px;font-size:8.9px;color:#1a1a1a;transform:scaleX(0.8668);">Cancelar</span>
<span class="t" style="left:1035.6px;top:539.47px;font-size:8.9px;color:#9a9a9a;transform:scaleX(0.8327);">Aplicar</span>
<span class="t" style="left:753.2px;top:510.71px;font-size:6.6px;color:#2a7bd6;transform:scaleX(1.0440);">A</span>
<span class="t" style="left:753.4px;top:517.71px;font-size:6.6px;color:#333;transform:scaleX(1.0915);">Z</span>
<span class="t" style="left:776.4px;top:510.71px;font-size:6.6px;color:#333;transform:scaleX(1.0915);">Z</span>
<span class="t" style="left:776.2px;top:517.71px;font-size:6.6px;color:#2a7bd6;transform:scaleX(1.0440);">A</span>
<span class="t" style="left:749.4px;top:156.58px;font-size:9px;color:#1a1a1a;transform:scaleX(0.9422);">Parámetro</span>
<span class="t" style="left:948.0px;top:156.58px;font-size:9px;color:#1a1a1a;transform:scaleX(0.9707);">Valor</span>
<span class="t" style="left:1057.5px;top:156.68px;font-size:9px;color:#1a1a1a;transform:scaleX(0.9496);">=</span>
<span class="t" style="left:679.0px;top:170.38px;font-size:9px;color:#707070;transform:scaleX(0.9489);">Transmitancia de luz visual</span>
<span class="t" style="left:862.0px;top:170.38px;font-size:9px;color:#707070;transform:scaleX(0.8789);">0.000000</span>
<span class="t" style="left:679.0px;top:183.58px;font-size:9px;color:#707070;transform:scaleX(0.9270);">Resistencia térmica (R)</span>
<span class="t" style="left:862.0px;top:183.58px;font-size:9px;color:#707070;transform:scaleX(0.9178);">0.3196 (m</span>
<span class="t" style="left:899.4px;top:183.34px;font-size:5.5px;color:#707070;transform:scaleX(0.9143);">2</span>
<span class="t" style="left:902.6px;top:183.58px;font-size:9px;color:#707070;transform:scaleX(0.9304);">·K)/W</span>
<span class="t" style="left:679.0px;top:196.78px;font-size:9px;color:#707070;transform:scaleX(0.9684);">Coeficiente de incremento de calor solar</span>
<span class="t" style="left:862.0px;top:196.78px;font-size:9px;color:#707070;transform:scaleX(0.8789);">0.000000</span>
<span class="t" style="left:679.0px;top:209.98px;font-size:9px;color:#707070;transform:scaleX(0.9531);">Coeficiente de transferencia de calor (U)</span>
<span class="t" style="left:862.0px;top:209.98px;font-size:9px;color:#707070;transform:scaleX(0.9237);">3.1287 W/(m</span>
<span class="t" style="left:909.8px;top:209.74px;font-size:5.5px;color:#707070;transform:scaleX(0.9143);">2</span>
<span class="t" style="left:913.0px;top:209.98px;font-size:9px;color:#707070;transform:scaleX(0.9167);">·K)</span>
<span class="t" style="left:679.0px;top:226.08px;font-size:9px;color:#000;font-weight:bold;transform:scaleX(0.9414);">Datos de identidad</span>
<span class="t" style="left:679.0px;top:238.78px;font-size:9px;color:#111;transform:scaleX(0.9859);-webkit-text-stroke:.22px #111;">Código de montaje</span>
<span class="t" style="left:862.0px;top:238.78px;font-size:9px;color:#111;transform:scaleX(0.8782);-webkit-text-stroke:.22px #111;">C1020</span>
<span class="t" style="left:679.0px;top:251.98px;font-size:9px;color:#111;transform:scaleX(0.9569);-webkit-text-stroke:.22px #111;">Nota clave</span>
<span class="t" style="left:679.0px;top:265.18px;font-size:9px;color:#111;-webkit-text-stroke:.22px #111;">Modelo</span>
<span class="t" style="left:679.0px;top:278.38px;font-size:9px;color:#111;transform:scaleX(0.9334);-webkit-text-stroke:.22px #111;">Fabricante</span>
<span class="t" style="left:862.0px;top:278.38px;font-size:9px;color:#111;transform:scaleX(0.9513);-webkit-text-stroke:.22px #111;">Grupo Palerm</span>
<span class="t" style="left:679.0px;top:291.58px;font-size:9px;color:#111;transform:scaleX(0.9733);-webkit-text-stroke:.22px #111;">Comentarios de tipo</span>
<span class="t" style="left:679.0px;top:304.78px;font-size:9px;color:#707070;transform:scaleX(0.9740);">Imagen de tipo</span>
<span class="t" style="left:679.0px;top:317.98px;font-size:9px;color:#111;transform:scaleX(0.7938);-webkit-text-stroke:.22px #111;">URL</span>
<span class="t" style="left:679.0px;top:331.18px;font-size:9px;color:#111;transform:scaleX(0.9483);-webkit-text-stroke:.22px #111;">Descripción</span>
<span class="t" style="left:679.0px;top:344.38px;font-size:9px;color:#111;transform:scaleX(0.9591);-webkit-text-stroke:.22px #111;">Clasificación para incendios</span>
<span class="t" style="left:679.0px;top:357.58px;font-size:9px;color:#111;transform:scaleX(0.9270);-webkit-text-stroke:.22px #111;">Costo</span>
<span class="t" style="left:862.0px;top:357.58px;font-size:9px;color:#111;transform:scaleX(0.9854);-webkit-text-stroke:.22px #111;">3038.95€</span>
<span class="t" style="left:679.0px;top:370.78px;font-size:9px;color:#707070;transform:scaleX(0.9674);">Descripción de montaje</span>
<span class="t" style="left:862.0px;top:370.78px;font-size:9px;color:#707070;transform:scaleX(0.9628);">Interior Doors</span>
<span class="t" style="left:679.0px;top:383.98px;font-size:9px;color:#111;transform:scaleX(0.9683);-webkit-text-stroke:.22px #111;">Marca de tipo</span>
<span class="t" style="left:862.0px;top:383.98px;font-size:9px;color:#111;transform:scaleX(0.8986);-webkit-text-stroke:.22px #111;">34</span>
<span class="t" style="left:679.0px;top:397.18px;font-size:9px;color:#707070;transform:scaleX(0.9652);">Número OmniClass</span>
<span class="t" style="left:862.0px;top:397.18px;font-size:9px;color:#707070;transform:scaleX(0.8741);">23.30.10.17.11</span>
<span class="t" style="left:679.0px;top:410.38px;font-size:9px;color:#707070;transform:scaleX(0.9503);">Título OmniClass</span>
<span class="t" style="left:862.0px;top:410.38px;font-size:9px;color:#707070;transform:scaleX(0.9452);">Sliding Doors</span>
<span class="t" style="left:679.0px;top:423.58px;font-size:9px;color:#707070;transform:scaleX(0.9885);">Nombre de código</span>
<span class="t" style="left:679.0px;top:439.68px;font-size:9px;color:#000;font-weight:bold;transform:scaleX(0.9169);">Parámetros IFC</span>
<span class="t" style="left:679.0px;top:452.38px;font-size:9px;color:#111;transform:scaleX(0.9496);-webkit-text-stroke:.22px #111;">Exportar tipo a IFC como</span>
<span class="t" style="left:679.0px;top:465.58px;font-size:9px;color:#111;transform:scaleX(0.9559);-webkit-text-stroke:.22px #111;">Operación</span>
<span class="t" style="left:679.0px;top:478.78px;font-size:9px;color:#111;transform:scaleX(0.9745);-webkit-text-stroke:.22px #111;">Introducir el tipo predefinido de IFC</span>
<span class="t" style="left:679.0px;top:491.98px;font-size:9px;color:#111;transform:scaleX(0.9307);-webkit-text-stroke:.22px #111;">Exportar tipo a IFC</span>
<span class="t" style="left:862.0px;top:491.98px;font-size:9px;color:#111;transform:scaleX(0.9646);-webkit-text-stroke:.22px #111;">Por defecto</span>
</div>
</body></html>
